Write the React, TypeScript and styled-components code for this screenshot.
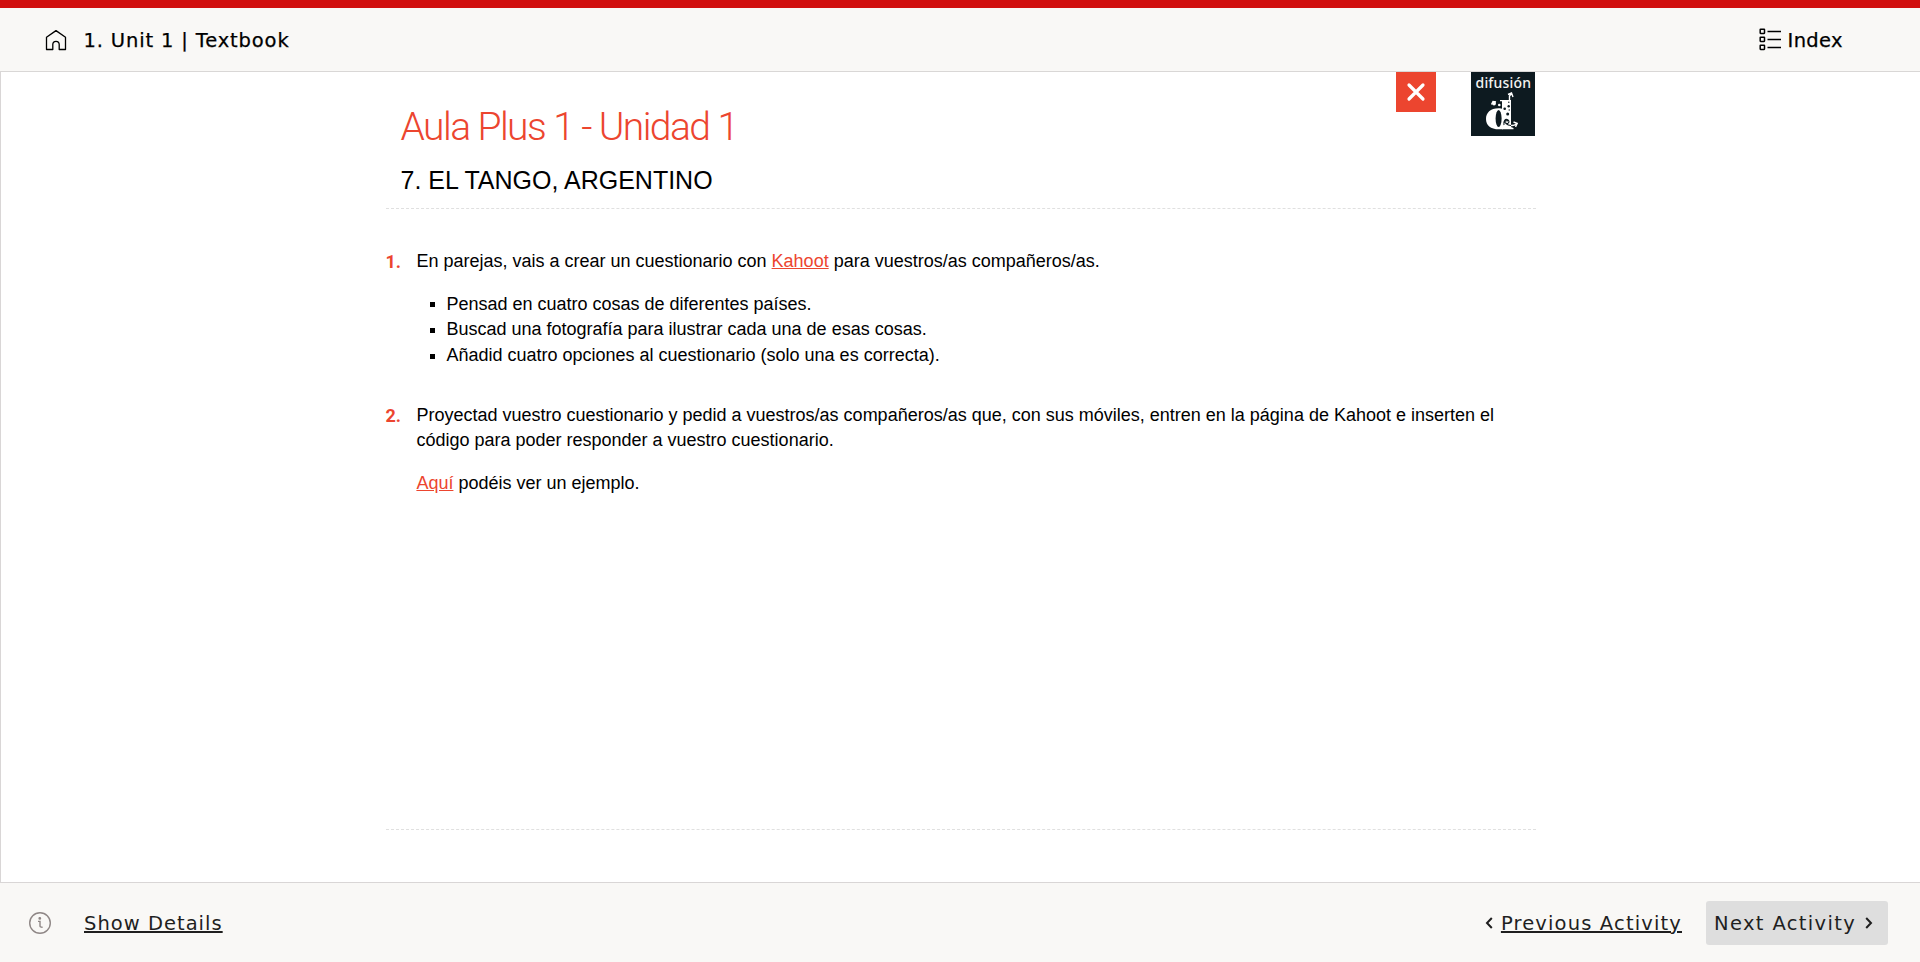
import React from 'react';
import styled, { createGlobalStyle } from 'styled-components';

const accent = '#ec452f';
const uiFont = '"DejaVu Sans", sans-serif';
const bodyFont = '"Liberation Sans", Arial, sans-serif';

const GlobalStyle = createGlobalStyle`
  * { box-sizing: border-box; }
  body { margin: 0; background: #fff; }
`;

const Page = styled.div`
  height: 100vh;
  display: flex;
  flex-direction: column;
  border-top: 8px solid #d10f0f;
  font-family: ${uiFont};
  font-size: 19.5px;
  line-height: 27px;
`;

const TopBar = styled.header`
  flex: none;
  height: 64px;
  display: flex;
  align-items: center;
  justify-content: space-between;
  padding: 0 77px 0 45px;
  background: #f9f8f6;
  border-bottom: 1px solid #d9d7d6;
  color: #000;
`;

const Crumb = styled.div`
  display: flex;
  align-items: center;
  gap: 16.5px;
`;

const IndexButton = styled.div`
  display: flex;
  align-items: center;
  gap: 5.5px;
`;

const BarLabel = styled.span<{ $spacing: number }>`
  padding-top: 2px;
  letter-spacing: ${(p) => p.$spacing}px;
  -webkit-text-stroke: 0.25px currentColor;
`;

const Stage = styled.main`
  flex: 1;
  min-height: 0;
  display: flex;
  justify-content: center;
  border-left: 1px solid #d9d6d6;
`;

const Sheet = styled.article`
  width: 1150px;
  height: 758px;
  display: flex;
  flex-direction: column;
  border-bottom: 1px dashed #e0e0e0;
  font-family: ${bodyFont};
  font-size: 18px;
  line-height: 25.7px;
  color: #000;
`;

const SheetHead = styled.div`
  height: 137px;
  display: flex;
  align-items: flex-start;
  padding: 0 0.5px 0 15px;
  border-bottom: 1px dashed #e0e0e0;
`;

const Titles = styled.div`
  flex: 1;
  padding-top: 32px;
`;

const Title = styled.h1`
  margin: 0 0 15px;
  font: 300 39px/47px Roboto, sans-serif;
  letter-spacing: -1.56px;
  color: ${accent};
`;

const Subtitle = styled.h2`
  margin: 0;
  font-size: 25px;
  font-weight: 400;
  line-height: 28px;
`;

const CloseButton = styled.div`
  width: 40px;
  height: 40px;
  margin-right: 35.5px;
  display: grid;
  place-items: center;
  background: ${accent};
  color: #fff;
`;

const Logo = styled.svg`
  display: block;
  width: 64px;
  height: 64px;
`;

const Tasks = styled.div`
  display: flex;
  flex-direction: column;
  gap: 34px;
  padding-top: 39.6px;
`;

const Task = styled.section`
  display: grid;
  grid-template-columns: 30.9px 1fr;
`;

const TaskNumber = styled.span`
  font-family: Roboto, sans-serif;
  font-weight: 700;
  color: ${accent};
`;

const TaskBody = styled.div`
  display: flex;
  flex-direction: column;
  gap: 17.3px;
  padding-right: 20px;
`;

const Text = styled.p`
  margin: 0;
`;

const Link = styled.a`
  color: ${accent};
  text-decoration: underline;
`;

const Bullets = styled.ul`
  margin: 0;
  padding: 0 0 0 13.6px;
  list-style: none;
`;

const Bullet = styled.li`
  display: flex;
  align-items: center;
  gap: 11.4px;
  &::before {
    content: '';
    width: 5px;
    height: 5px;
    margin-top: 0.8px;
    background: #000;
  }
`;

const BottomBar = styled.footer`
  flex: none;
  height: 80px;
  display: flex;
  align-items: center;
  padding: 0 32px 0 29px;
  background: #f9f8f6;
  border-top: 1px solid #d9d6d6;
  color: #1f1f1f;
`;

const Details = styled.div`
  flex: 1;
  display: flex;
  align-items: center;
  gap: 33px;
`;

const NavLabel = styled.span<{ $underlined?: boolean; $spacing: number }>`
  padding-top: 2px;
  letter-spacing: ${(p) => p.$spacing}px;
  text-decoration: ${(p) => (p.$underlined ? 'underline 2px' : 'none')};
  text-underline-offset: 1px;
`;

const Previous = styled.div`
  display: flex;
  align-items: center;
  gap: 8px;
  margin-right: 24px;
`;

const Next = styled.div`
  width: 182px;
  height: 44px;
  display: flex;
  align-items: center;
  justify-content: space-between;
  padding: 0 15px 0 8px;
  border-radius: 3px;
  background: #dedede;
`;

const Icon = styled.svg`
  display: block;
  flex: none;
  fill: none;
  stroke: currentColor;
`;

const HomeIcon = () => (
  <Icon width="22" height="22" viewBox="0 0 22 22" strokeWidth="1.3" strokeLinejoin="round">
    <path d="M1.5 8.3 11 1.6l9.5 6.7v12.2h-6.3v-5a3.2 3.2 0 0 0-6.4 0v5H1.5z" />
  </Icon>
);

const ListIcon = () => (
  <Icon width="23" height="23" viewBox="0 0 23 23" strokeWidth="1.5">
    {[1.2, 9.2, 17.2].map((y) => (
      <React.Fragment key={y}>
        <rect x="1.2" y={y} width="4.3" height="4.3" rx="0.4" />
        <path d={`M8.5 ${y + 2.3}H22`} />
      </React.Fragment>
    ))}
  </Icon>
);

const InfoIcon = () => (
  <Icon width="22" height="22" viewBox="0 0 22 22" strokeWidth="1.4" color="#8f8786">
    <circle cx="11" cy="11" r="10.3" />
    <path d="M9 9.4h2v4.6q0 1.3 2.6 1.2" />
    <circle cx="10.8" cy="6.4" r="0.7" fill="currentColor" />
  </Icon>
);

const Chevron = ({ right = false }: { right?: boolean }) => (
  <Icon width="8" height="12" viewBox="0 0 8 12" strokeWidth="2">
    <path d={right ? 'M1.2 1 6 6l-4.8 5' : 'M6.8 1 2 6l4.8 5'} />
  </Icon>
);

const PublisherLogo = () => (
  <Logo viewBox="0 0 64 64">
    <rect width="64" height="64" fill="#0d1a20" />
    <text x="4.5" y="15.5" fill="#f4f4f2" fontFamily="Noto Sans, sans-serif" fontWeight="500" fontSize="14" textLength="55.5" lengthAdjust="spacing">
      difusión
    </text>
    <g fill="#fff">
      <path d="M30 36.4C20 35.5 15 40.5 15 47s5 11 15 10.300h2V37z" />
      <path d="M29 28h11v27l2.500 1v1.200H31V29.200h-2z" />
      <circle cx="23" cy="31.5" r="1.9" />
      <circle cx="28.3" cy="33" r="1.3" />
    </g>
    <ellipse cx="27.6" cy="46.5" rx="3" ry="8.600" fill="#0d1a20" />
    <g fill="#0d1a20">
      <circle cx="33.7" cy="36.7" r="1.3" />
      <circle cx="37.7" cy="34.3" r="1.2" />
      <circle cx="36.7" cy="42" r="1.500" />
      <circle cx="37.8" cy="30.200" r="0.7" />
      <circle cx="38.2" cy="38" r="0.7" />
    </g>
    <g fill="none" strokeWidth="1.1">
      <path stroke="#0d1a20" d="M33 53c-1-4 1.500-7 4-5s-.5 4.500-2.500 3 1-3 2.500-2M35 51.500q2 2 5 2" />
      <path stroke="#fff" strokeWidth="1.4" d="M38.500 28v-4l2-2.500M37 22.500l3.500-1.500 1.500 4M20.500 32.500l1.500-3 3 .5M40 53.500q3 .3 6-2M42.500 50l3.700 1.400-1.700 3.500" />
    </g>
  </Logo>
);

export default function App() {
  return (
    <Page>
      <GlobalStyle />
      <TopBar>
        <Crumb>
          <HomeIcon />
          <BarLabel $spacing={0.85}>1. Unit 1 | Textbook</BarLabel>
        </Crumb>
        <IndexButton>
          <ListIcon />
          <BarLabel $spacing={0.35}>Index</BarLabel>
        </IndexButton>
      </TopBar>
      <Stage>
        <Sheet>
          <SheetHead>
            <Titles>
              <Title>Aula Plus 1 - Unidad 1</Title>
              <Subtitle>7. EL TANGO, ARGENTINO</Subtitle>
            </Titles>
            <CloseButton>
              <Icon width="20" height="20" viewBox="0 0 20 20" strokeWidth="3.2" strokeLinecap="round">
                <path d="m3 3 14 14M17 3 3 17" />
              </Icon>
            </CloseButton>
            <PublisherLogo />
          </SheetHead>
          <Tasks>
            <Task>
              <TaskNumber>1.</TaskNumber>
              <TaskBody>
                <Text>
                  En parejas, vais a crear un cuestionario con <Link>Kahoot</Link> para vuestros/as compañeros/as.
                </Text>
                <Bullets>
                  <Bullet>Pensad en cuatro cosas de diferentes países.</Bullet>
                  <Bullet>Buscad una fotografía para ilustrar cada una de esas cosas.</Bullet>
                  <Bullet>Añadid cuatro opciones al cuestionario (solo una es correcta).</Bullet>
                </Bullets>
              </TaskBody>
            </Task>
            <Task>
              <TaskNumber>2.</TaskNumber>
              <TaskBody>
                <Text>
                  Proyectad vuestro cuestionario y pedid a vuestros/as compañeros/as que, con sus móviles, entren en la
                  página de Kahoot e inserten el código para poder responder a vuestro cuestionario.
                </Text>
                <Text>
                  <Link>Aquí</Link> podéis ver un ejemplo.
                </Text>
              </TaskBody>
            </Task>
          </Tasks>
        </Sheet>
      </Stage>
      <BottomBar>
        <Details>
          <InfoIcon />
          <NavLabel $underlined $spacing={1.02}>Show Details</NavLabel>
        </Details>
        <Previous>
          <Chevron />
          <NavLabel $underlined $spacing={1.15}>Previous Activity</NavLabel>
        </Previous>
        <Next>
          <NavLabel $spacing={1.35}>Next Activity</NavLabel>
          <Chevron right />
        </Next>
      </BottomBar>
    </Page>
  );
}
